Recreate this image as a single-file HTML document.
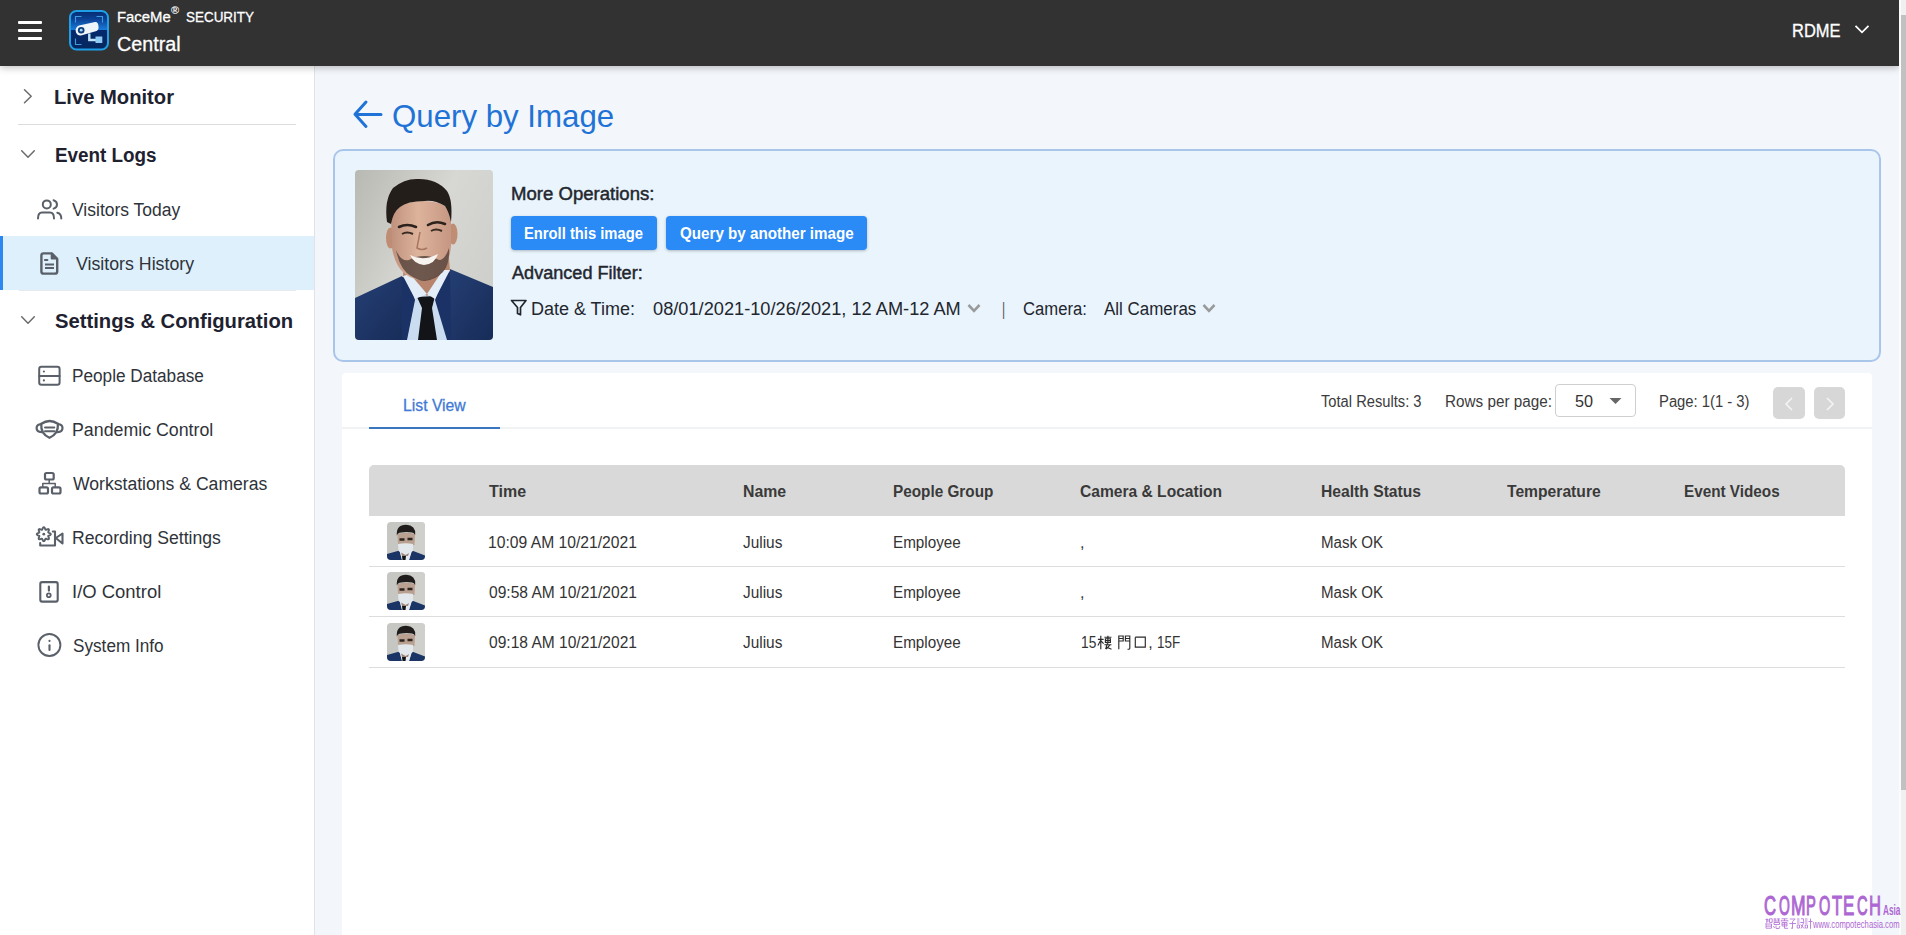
<!DOCTYPE html>
<html><head><meta charset="utf-8"><title>FaceMe Security Central - Query by Image</title>
<style>
html,body{margin:0;padding:0;width:1906px;height:935px;overflow:hidden;background:#f3f6fb;font-family:"Liberation Sans",sans-serif;}
.a{position:absolute;box-sizing:border-box;}
.t{position:absolute;white-space:nowrap;line-height:1;transform-origin:0 0;font-family:"Liberation Sans",sans-serif;}
svg{position:absolute;overflow:visible;}
</style></head><body>
<!-- main background -->
<div class="a" style="left:0;top:0;width:1899px;height:935px;background:#f3f6fb"></div>
<!-- sidebar -->
<div class="a" style="left:0;top:66px;width:314px;height:869px;background:#fff"></div>
<div class="a" style="left:314px;top:66px;width:1px;height:869px;background:#dfe2e7"></div>
<div class="a" style="left:18px;top:124px;width:278px;height:1px;background:#dcdcdc"></div>
<div class="a" style="left:0;top:236px;width:314px;height:54px;background:#def0fb"></div>
<div class="a" style="left:0;top:236px;width:3px;height:54px;background:#2c87f0"></div>
<div class="a" style="left:19px;top:290px;width:277px;height:1px;background:#e6eaee"></div>

<!-- header -->
<div class="a" style="left:0;top:0;width:1899px;height:66px;background:#323232;box-shadow:0 2px 7px rgba(0,0,0,.24)"></div>
<div class="a" style="left:18px;top:21px;width:24px;height:3px;background:#fff;border-radius:1px"></div>
<div class="a" style="left:18px;top:29px;width:24px;height:3px;background:#fff;border-radius:1px"></div>
<div class="a" style="left:18px;top:37px;width:24px;height:3px;background:#fff;border-radius:1px"></div>
<!-- logo -->
<svg style="left:69px;top:10px" width="40" height="41" viewBox="0 0 40 41">
  <defs><linearGradient id="lg" x1="0" y1="0" x2="0" y2="1">
    <stop offset="0" stop-color="#062a6e"/><stop offset="0.2" stop-color="#0b3f92"/><stop offset="0.48" stop-color="#1a78d8"/><stop offset="0.5" stop-color="#06296c"/><stop offset="1" stop-color="#05285f"/></linearGradient></defs>
  <rect x="1" y="1" width="38" height="38.5" rx="6.5" fill="url(#lg)" stroke="#1f9fe8" stroke-width="2"/>
  <path d="M6.5 12.5V6.5h6M27.5 6.5h6v6M6.5 28.5v6h6" fill="none" stroke="#3f9be0" stroke-width="1.1"/>
  <path d="M7.5 17.5 Q6 19.5 7 22.5 Q8.5 26 12 25.5 L27.5 21 Q30 20 29.5 16 Q29 11.5 26 12 L10 15.5 Q8.5 16 7.5 17.5Z" fill="#eef5fb"/>
  <circle cx="12.2" cy="20.2" r="3.3" fill="#0c3b7c"/><circle cx="12.2" cy="20.2" r="1.4" fill="#a8d4f4"/>
  <path d="M20.3 23.5 V30 H28" fill="none" stroke="#bfe2f8" stroke-width="2.4"/>
  <rect x="26.5" y="26.5" width="6.8" height="6.5" fill="#8fcaf2"/>
</svg>
<div class="t" style="left:171px;top:5px;font-size:11px;font-weight:bold;color:#fff">&#174;</div>
<svg style="left:1854px;top:24px" width="16" height="11" viewBox="0 0 16 11"><path d="M1.5 1.8 L8 8.3 L14.5 1.8" fill="none" stroke="#fff" stroke-width="1.8"/></svg>

<!-- scrollbar -->
<div class="a" style="left:1899px;top:0;width:7px;height:935px;background:#f0f0f0"></div>
<div class="a" style="left:1899px;top:0;width:2px;height:935px;background:#fbfbfb"></div>
<div class="a" style="left:1901px;top:15px;width:5px;height:775px;background:#c1c1c1"></div>

<!-- sidebar icons -->
<svg style="left:0;top:0" width="70" height="700" viewBox="0 0 70 700" fill="none" stroke="#5a6069" stroke-width="2" stroke-linecap="round" stroke-linejoin="round">
  <path d="M24.5 89.8 L31.2 96.3 L24.5 102.8" stroke="#6b6b6b" stroke-width="1.5"/>
  <path d="M21.7 150.8 L28 157.3 L34.3 150.8" stroke="#6b6b6b" stroke-width="1.5"/>
  <path d="M21.7 316.8 L28 323.3 L34.3 316.8" stroke="#6b6b6b" stroke-width="1.5"/>
  <!-- visitors today -->
  <circle cx="46.8" cy="204.4" r="4"/>
  <path d="M53.6 200.2 Q57 201.5 57 204.4 Q57 207.4 53.6 208.6"/>
  <path d="M38 218.5 Q38 212.6 42 212.6 H50 Q54 212.6 54 218.5"/>
  <path d="M57.3 212.8 Q61.3 213.8 61.3 218.5"/>
  <!-- doc -->
  <path d="M43.5 253.4 H51.8 L57.2 258.8 V271.4 Q57.2 273.6 55 273.6 H43.6 Q41.4 273.6 41.4 271.4 V255.6 Q41.4 253.4 43.5 253.4Z" stroke-width="2.4"/>
  <path d="M51.5 253.6 V258.6 H57" fill="#5a6069" stroke-width="1.6"/>
  <path d="M45 260 H47.3" stroke-width="2.2"/>
  <path d="M45 264.5 H54 M45 268 H54" stroke-width="2.2" stroke-linecap="butt"/>
  <!-- people db -->
  <rect x="39.2" y="366.8" width="20.4" height="18" rx="2.2"/>
  <path d="M39.2 376 H59.6"/>
  <circle cx="43.9" cy="371.5" r="1.1" fill="#5a6069" stroke="none"/>
  <circle cx="43.9" cy="380.4" r="1.1" fill="#5a6069" stroke="none"/>
  <!-- mask -->
  <path d="M41.3 423.8 Q49.6 418.2 57.9 423.8 Q58.6 433.5 49.5 437.8 Q40.4 433.5 41.3 423.8Z" stroke-width="2.3"/>
  <path d="M41.2 424.2 Q36.6 424.5 36.6 428 Q36.6 431.8 41.5 432.2 M58 424.2 Q62.5 424.5 62.5 428 Q62.5 431.8 57.6 432.2" stroke-width="2.2"/>
  <path d="M45 427.5 H54.3 M45 431.3 H54.3" stroke-width="2"/>
  <!-- network -->
  <rect x="45" y="473" width="8.7" height="6.5" rx="1.5" stroke-width="2.2"/>
  <path d="M49.2 479.5 V483.5 M42.8 486.3 V483.5 H55.2 V486.3" stroke-width="1.5"/>
  <rect x="39.5" y="487.3" width="8.5" height="6.2" rx="1.5" stroke-width="2.2"/>
  <rect x="52" y="487.3" width="8.5" height="6.2" rx="1.5" stroke-width="2.2"/>
  <!-- recording -->
  <path d="M50.80 534.20 L50.64 534.65 L50.19 535.04 L49.59 535.35 L48.97 535.58 L48.48 535.79 L48.23 536.04 L48.24 536.39 L48.43 536.88 L48.71 537.48 L48.92 538.13 L48.95 538.72 L48.75 539.15 L48.32 539.35 L47.73 539.32 L47.08 539.11 L46.48 538.83 L45.99 538.64 L45.64 538.63 L45.39 538.88 L45.18 539.37 L44.95 539.99 L44.64 540.59 L44.25 541.04 L43.80 541.20 L43.35 541.04 L42.96 540.59 L42.65 539.99 L42.42 539.37 L42.21 538.88 L41.96 538.63 L41.61 538.64 L41.12 538.83 L40.52 539.11 L39.87 539.32 L39.28 539.35 L38.85 539.15 L38.65 538.72 L38.68 538.13 L38.89 537.48 L39.17 536.88 L39.36 536.39 L39.37 536.04 L39.12 535.79 L38.63 535.58 L38.01 535.35 L37.41 535.04 L36.96 534.65 L36.80 534.20 L36.96 533.75 L37.41 533.36 L38.01 533.05 L38.63 532.82 L39.12 532.61 L39.37 532.36 L39.36 532.01 L39.17 531.53 L38.89 530.92 L38.68 530.27 L38.65 529.68 L38.85 529.25 L39.28 529.05 L39.87 529.08 L40.52 529.29 L41.12 529.57 L41.61 529.76 L41.96 529.77 L42.21 529.52 L42.42 529.03 L42.65 528.41 L42.96 527.81 L43.35 527.36 L43.80 527.20 L44.25 527.36 L44.64 527.81 L44.95 528.41 L45.18 529.03 L45.39 529.52 L45.64 529.77 L45.99 529.76 L46.48 529.57 L47.08 529.29 L47.73 529.08 L48.32 529.05 L48.75 529.25 L48.95 529.68 L48.92 530.27 L48.71 530.92 L48.43 531.53 L48.24 532.01 L48.23 532.36 L48.48 532.61 L48.97 532.82 L49.59 533.05 L50.19 533.36 L50.64 533.75Z" stroke-width="1.9"/>
  <circle cx="43.8" cy="534.2" r="1.4" fill="#5a6069" stroke="none"/>
  <path d="M40.2 543 V545.5 H55 V531.5 H52.8" stroke-width="2.1"/>
  <path d="M55.8 538 L62.5 533.5 V543.5 Z" stroke-width="2.1"/>
  <!-- io -->
  <rect x="40.3" y="582.1" width="17.4" height="19.5" rx="1.8" stroke-width="2.1"/>
  <path d="M48.9 586.5 V590.6" stroke-width="2.2"/>
  <circle cx="48.8" cy="595.3" r="1.9" stroke-width="1.8"/>
  <!-- info -->
  <circle cx="49.4" cy="645" r="11" stroke-width="1.9"/>
  <circle cx="49.5" cy="640.9" r="1.1" fill="#5a6069" stroke="none"/>
  <path d="M49.5 645.2 V650" stroke-width="2.1"/>
</svg>

<!-- title arrow -->
<svg style="left:352px;top:99px" width="32" height="30" viewBox="0 0 32 30" fill="none" stroke="#1f73d6" stroke-width="3" stroke-linecap="round" stroke-linejoin="round">
  <path d="M29 15.5 H3.5 M14 3 L3 15.2 L14 27.5"/>
</svg>

<!-- filter card -->
<div class="a" style="left:333px;top:149px;width:1548px;height:213px;background:#e9f4fd;border:2px solid #a9c6ea;border-radius:10px"></div>
<!-- photo -->
<svg style="left:355px;top:170px" width="138" height="170" viewBox="0 0 138 170">
  <defs>
    <clipPath id="pc"><rect x="0" y="0" width="138" height="170" rx="4"/></clipPath>
    <linearGradient id="bgg" x1="0" y1="0" x2="1" y2="0.6"><stop offset="0" stop-color="#b8b9b2"/><stop offset="0.55" stop-color="#d7d7d3"/><stop offset="1" stop-color="#cfd0cb"/></linearGradient>
    <linearGradient id="skin" x1="0" y1="0" x2="1" y2="0"><stop offset="0" stop-color="#bf917c"/><stop offset="0.45" stop-color="#ddb39c"/><stop offset="1" stop-color="#c69782"/></linearGradient>
    <linearGradient id="suit" x1="0" y1="0" x2="1" y2="1"><stop offset="0" stop-color="#253f74"/><stop offset="1" stop-color="#172c58"/></linearGradient>
  </defs>
  <g clip-path="url(#pc)">
    <rect width="138" height="170" fill="url(#bgg)"/>
    <path d="M47 108 L95 100 L93 170 L51 170Z" fill="#cadcef"/>
    <path d="M0 128 L47 106 L52 170 L0 170Z" fill="url(#suit)"/>
    <path d="M95 99 L138 117 L138 170 L92 170Z" fill="url(#suit)"/>
    <path d="M47 107 L53 105 L60 130 L52 170 L47 170Z" fill="#1a3265"/>
    <path d="M95 100 L90 103 L80 130 L92 170 L96 170Z" fill="#1a3265"/>
    <path d="M62 127 L80 126 L77 138 L82 170 L63 170 L67 138Z" fill="#121418"/>
    <path d="M49 92 L94 88 L95 101 L72 126 L48 107Z" fill="#b7856d"/>
    <path d="M48 106 L60 129 L72 124 L55 104Z" fill="#e3edf7"/>
    <path d="M95 100 L80 129 L72 124 L88 100Z" fill="#e3edf7"/>
    <ellipse cx="35.5" cy="68" rx="4.5" ry="10.5" fill="#bf8c74"/>
    <ellipse cx="98" cy="64" rx="4.5" ry="10.5" fill="#bf8c74"/>
    <path d="M36 46 Q38 33 66 31 Q94 31 96 46 L96 76 Q94 98 84 104 Q76 110 68 110 Q58 110 50 104 Q40 96 37 78Z" fill="url(#skin)"/>
    <path d="M41 80 Q45 100 56 106 Q64 111 70 111 Q80 110 88 102 Q95 94 94 78 Q90 90 84 90 Q77 86 70 86 Q60 86 54 90 Q46 92 41 80Z" fill="#4a3a33" opacity=".75"/>
    <path d="M55 85 Q68 92 83 84 Q80 94 69 95 Q59 94 55 85Z" fill="#f7f3ee"/>
    <path d="M44 57 Q52 53 61 57 M73 55 Q81 50 90 54" stroke="#2c211c" stroke-width="2.6" fill="none" stroke-linecap="round"/>
    <path d="M47 64 Q52 61 58 64 M76 61 Q81 58 87 61" stroke="#3a2a22" stroke-width="2" fill="none"/>
    <path d="M65 62 L62 78 Q67 81 72 78" stroke="#a97660" stroke-width="1.5" fill="none"/>
    <path d="M32 52 Q29 30 38 18 Q50 8 64 9 Q82 9 92 21 Q98 30 96 52 Q94 42 90 36 Q80 30 70 31 Q52 31 45 37 Q38 42 36 54Z" fill="#241e1b"/>
  </g>
</svg>
<!-- buttons -->
<div class="a" style="left:511px;top:216px;width:146px;height:34px;background:#2a8af6;border-radius:4px;box-shadow:0 1px 3px rgba(0,0,0,.25)"></div>
<div class="a" style="left:666px;top:216px;width:201px;height:34px;background:#2a8af6;border-radius:4px;box-shadow:0 1px 3px rgba(0,0,0,.25)"></div>
<!-- filter icon -->
<svg style="left:510px;top:299px" width="18" height="18" viewBox="0 0 18 18" fill="none" stroke="#23262d" stroke-width="1.7" stroke-linejoin="round">
  <path d="M1.5 1.5 H16 L10.5 8.5 V15.8 L7.5 14.5 V8.5Z"/>
</svg>
<svg style="left:966px;top:302px" width="16" height="13" viewBox="0 0 16 13"><path d="M2.5 3 L8 8.8 L13.5 3" fill="none" stroke="#9a9a9a" stroke-width="2.6"/></svg>
<svg style="left:1201px;top:302px" width="16" height="13" viewBox="0 0 16 13"><path d="M2.5 3 L8 8.8 L13.5 3" fill="none" stroke="#9a9a9a" stroke-width="2.6"/></svg>

<!-- results panel -->
<div class="a" style="left:342px;top:373px;width:1530px;height:562px;background:#fff;border-radius:4px 4px 0 0"></div>
<div class="a" style="left:342px;top:427px;width:1530px;height:2px;background:#f1f2f4"></div>
<div class="a" style="left:369px;top:427px;width:131px;height:2px;background:#3a76bd"></div>
<!-- rows per page select -->
<div class="a" style="left:1555px;top:384px;width:81px;height:33px;border:1px solid #cfcfcf;border-radius:4px;background:#fff"></div>
<svg style="left:1608px;top:396px" width="16" height="10" viewBox="0 0 16 10"><path d="M1.5 2 H13.5 L7.5 8Z" fill="#666"/></svg>
<!-- page nav -->
<div class="a" style="left:1773px;top:387px;width:32px;height:32px;background:#d7d7d7;border-radius:5px"></div>
<div class="a" style="left:1814px;top:387px;width:31px;height:32px;background:#d7d7d7;border-radius:5px"></div>
<svg style="left:1783px;top:396px" width="12" height="16" viewBox="0 0 12 16"><path d="M9 2 L3 8 L9 14" fill="none" stroke="#f4f4f4" stroke-width="1.6"/></svg>
<svg style="left:1824px;top:396px" width="12" height="16" viewBox="0 0 12 16"><path d="M3 2 L9 8 L3 14" fill="none" stroke="#f4f4f4" stroke-width="1.6"/></svg>

<!-- table -->
<div class="a" style="left:369px;top:465px;width:1476px;height:51px;background:#d9d9d9;border-radius:5px 5px 0 0"></div>
<div class="a" style="left:369px;top:566px;width:1476px;height:1px;background:#dddddd"></div>
<div class="a" style="left:369px;top:616px;width:1476px;height:1px;background:#dddddd"></div>
<div class="a" style="left:369px;top:667px;width:1476px;height:1px;background:#dddddd"></div>

<svg width="0" height="0" style="position:absolute">
  <defs>
    <clipPath id="tc"><rect x="0" y="0" width="38" height="38" rx="4"/></clipPath>
    <g id="thumb">
      <g clip-path="url(#tc)">
        <rect width="38" height="38" fill="#c6c7c2"/>
        <rect x="22" y="0" width="16" height="38" fill="#cfd0cb"/>
        <path d="M0 32 L12.5 28.5 L15 38 L0 38Z" fill="#1b3466"/>
        <path d="M38 33.5 L25 28.5 L22 38 L38 38Z" fill="#1b3466"/>
        <path d="M12.5 28.5 L25 28.5 L22 38 L15 38Z" fill="#e4ebf3"/>
        <path d="M15 34 L19 34 L18.5 38 L15.5 38Z" fill="#111316"/>
        <path d="M13.5 28 L23 28 L21 34 L15 34Z" fill="#9c8377"/>
        <path d="M10.5 12 Q19 9.5 28 12 L27.5 23 L11 23Z" fill="#b9a091"/>
        <path d="M12.5 17.5 H17.5 M20.5 17 H25.5" stroke="#2e2420" stroke-width="2.6"/>
        <path d="M11 22 Q19 20.5 26 22 L26 29 L18.5 33 L11.5 29Z" fill="#e2e8ec"/>
        <path d="M9.8 13.5 Q9 3 19 2.8 Q29 3 28.2 13 Q27 10.5 25 10.5 Q19 9.5 12.5 10.8 Q10.5 11.5 9.8 13.5Z" fill="#1f1c1b"/>
      </g>
    </g>
  </defs>
</svg>
<svg style="left:387px;top:522px" width="38" height="38"><use href="#thumb"/></svg>
<svg style="left:387px;top:572px" width="38" height="38"><use href="#thumb"/></svg>
<svg style="left:387px;top:623px" width="38" height="38"><use href="#thumb"/></svg>

<!-- watermark -->
<svg style="left:1765px;top:918px" width="48" height="11" viewBox="0 0 48 11" fill="none" stroke="#b57ad8" stroke-width="0.9">
  <path d="M0.5 1.5H3.5M1 3H4M2 0.5V4.5L0.5 5.5M4.5 0.8H7.2V4.4H4.5Z M1 6H6.5V10.2H1Z M1 8.1H6.5"/>
  <path d="M8.5 1H11.5M12 1H15M10 0.5V3.5M13.5 0.5V3.5M8.5 3H15M9 4.5H14.5V6.5H9Z M8.5 8L9.5 10M11 7.5V10.5H14.5M15 8L14 10"/>
  <path d="M16.5 0.8H22.5M19.5 0.8V3M16.3 2V3.5M22.8 2V3.5M16.8 2.8H22.3M17 4.5H22V8H17ZM17 6.2H22M19.5 4.5V10.3H23"/>
  <path d="M24.8 1H30.2L27.5 3.5M27.5 3.5V10.5L26 10M24.3 5.5H31"/>
  <path d="M32 1H34.5M32 3H34.5M32 5H34.5M32.2 7H34.5V10H32.2ZM36 0.8H38.5V3L39 4M35.3 4.5H38.8L36 10.5M35.8 6.5L39 10.5"/>
  <path d="M40 1H42.5M40 3H42.5M40 5H42.5M40.2 7H42.5V10H40.2ZM43.5 3.5H47.5M45.5 0.5V10.8"/>
</svg>

<svg style="left:1097px;top:635px" width="50" height="15" viewBox="0 0 50 15" fill="none" stroke="#2a2a2a" stroke-width="1.15">
  <g transform="translate(0.6 0.4)"><path d="M0.3 4H6M3.2 0.3V13.8M3 5L0.3 10M3.4 5.5L6 8.2"/>
  <path d="M6.8 1.8H13.8M7.8 3.3H12.8V7H7.8ZM10.3 0.3V8M7.8 5.1H12.8M6.8 9.3H13.8M9.8 8L8 13.8M8.2 11.2Q11 12.8 13.9 13.8M12.4 9.5L8.5 13.8"/></g>
  <g transform="translate(21.2 0.4)"><path d="M0.6 13.8V0.6H5V5.6H0.6M0.6 3.1H5M11.6 12.8V0.6H7.2V5.6H11.6M7.2 3.1H11.6M11.6 12.8Q11.6 13.8 10.4 13.8H9.3"/></g>
  <g transform="translate(37.7 1.6)"><path d="M0.6 0.6H10.6V11.2M0.6 0.6V11.2M0.6 10.6H10.6"/></g>
</svg>
<div class="t" style="left:116.61px;top:9px;font-size:15px;font-weight:normal;color:#fff;transform:scaleX(0.9916);-webkit-text-stroke:0.3px #fff;">FaceMe</div>
<div class="t" style="left:186.00px;top:9px;font-size:15px;font-weight:normal;color:#fff;transform:scaleX(0.8967);-webkit-text-stroke:0.3px #fff;">SECURITY</div>
<div class="t" style="left:116.61px;top:34px;font-size:20px;font-weight:normal;color:#fff;transform:scaleX(0.9853);-webkit-text-stroke:0.3px #fff;">Central</div>
<div class="t" style="left:1792.48px;top:22px;font-size:18px;font-weight:normal;color:#fff;transform:scaleX(0.9155);-webkit-text-stroke:0.3px #fff;">RDME</div>
<div class="t" style="left:54.49px;top:87px;font-size:20px;font-weight:bold;color:#1e2230;transform:scaleX(1.0093);">Live Monitor</div>
<div class="t" style="left:54.56px;top:145px;font-size:20px;font-weight:bold;color:#1e2230;transform:scaleX(0.9422);">Event Logs</div>
<div class="t" style="left:72.40px;top:201px;font-size:18px;font-weight:normal;color:#2f333a;transform:scaleX(0.9721);">Visitors Today</div>
<div class="t" style="left:75.90px;top:255px;font-size:18px;font-weight:normal;color:#2f333a;transform:scaleX(0.9867);">Visitors History</div>
<div class="t" style="left:54.90px;top:311px;font-size:20px;font-weight:bold;color:#1e2230;transform:scaleX(1.0110);">Settings &amp; Configuration</div>
<div class="t" style="left:72.05px;top:367px;font-size:18px;font-weight:normal;color:#2f333a;transform:scaleX(0.9548);">People Database</div>
<div class="t" style="left:72.11px;top:421px;font-size:18px;font-weight:normal;color:#2f333a;transform:scaleX(0.9875);">Pandemic Control</div>
<div class="t" style="left:73.10px;top:475px;font-size:18px;font-weight:normal;color:#2f333a;transform:scaleX(0.9777);">Workstations &amp; Cameras</div>
<div class="t" style="left:72.12px;top:529px;font-size:18px;font-weight:normal;color:#2f333a;transform:scaleX(0.9789);">Recording Settings</div>
<div class="t" style="left:72.27px;top:583px;font-size:18px;font-weight:normal;color:#2f333a;transform:scaleX(1.0255);">I/O Control</div>
<div class="t" style="left:73.30px;top:637px;font-size:18px;font-weight:normal;color:#2f333a;transform:scaleX(0.9534);">System Info</div>
<div class="t" style="left:391.72px;top:100px;font-size:32px;font-weight:normal;color:#1f73d6;transform:scaleX(0.9758);">Query by Image</div>
<div class="t" style="left:510.67px;top:185px;font-size:18px;font-weight:normal;color:#23262d;transform:scaleX(1.0317);-webkit-text-stroke:0.45px #23262d;">More Operations:</div>
<div class="t" style="left:524.28px;top:226px;font-size:16px;font-weight:bold;color:#fff;transform:scaleX(0.9225);">Enroll this image</div>
<div class="t" style="left:680.20px;top:226px;font-size:16px;font-weight:bold;color:#fff;transform:scaleX(0.9478);">Query by another image</div>
<div class="t" style="left:511.70px;top:264px;font-size:18px;font-weight:normal;color:#23262d;transform:scaleX(1.0050);-webkit-text-stroke:0.45px #23262d;">Advanced Filter:</div>
<div class="t" style="left:530.90px;top:300px;font-size:18px;font-weight:normal;color:#23262d;">Date &amp; Time:</div>
<div class="t" style="left:652.60px;top:300px;font-size:18px;font-weight:normal;color:#23262d;transform:scaleX(1.0117);">08/01/2021-10/26/2021, 12 AM-12 AM</div>
<div class="t" style="left:1002.33px;top:300px;font-size:18px;font-weight:normal;color:#555;transform:scaleX(0.6667);">|</div>
<div class="t" style="left:1022.80px;top:300px;font-size:18px;font-weight:normal;color:#23262d;transform:scaleX(0.9247);">Camera:</div>
<div class="t" style="left:1103.60px;top:300px;font-size:18px;font-weight:normal;color:#23262d;transform:scaleX(0.9416);">All Cameras</div>
<div class="t" style="left:402.52px;top:398px;font-size:16px;font-weight:normal;color:#3f7ad6;transform:scaleX(0.9845);-webkit-text-stroke:0.3px #3f7ad6;">List View</div>
<div class="t" style="left:1321.00px;top:394px;font-size:16px;font-weight:normal;color:#3b3b3b;transform:scaleX(0.9189);">Total Results: 3</div>
<div class="t" style="left:1444.95px;top:394px;font-size:16px;font-weight:normal;color:#3b3b3b;transform:scaleX(0.9542);">Rows per page:</div>
<div class="t" style="left:1574.80px;top:393px;font-size:17px;font-weight:normal;color:#333;transform:scaleX(0.9537);">50</div>
<div class="t" style="left:1659.37px;top:394px;font-size:16px;font-weight:normal;color:#3b3b3b;transform:scaleX(0.9254);">Page: 1(1 - 3)</div>
<div class="t" style="left:489.00px;top:484px;font-size:16px;font-weight:bold;color:#3a3a3a;">Time</div>
<div class="t" style="left:743.01px;top:484px;font-size:16px;font-weight:bold;color:#3a3a3a;transform:scaleX(0.9911);">Name</div>
<div class="t" style="left:892.84px;top:484px;font-size:16px;font-weight:bold;color:#3a3a3a;transform:scaleX(0.9565);">People Group</div>
<div class="t" style="left:1080.20px;top:484px;font-size:16px;font-weight:bold;color:#3a3a3a;transform:scaleX(0.9742);">Camera &amp; Location</div>
<div class="t" style="left:1321.32px;top:484px;font-size:16px;font-weight:bold;color:#3a3a3a;transform:scaleX(0.9788);">Health Status</div>
<div class="t" style="left:1506.70px;top:484px;font-size:16px;font-weight:bold;color:#3a3a3a;transform:scaleX(0.9788);">Temperature</div>
<div class="t" style="left:1683.75px;top:484px;font-size:16px;font-weight:bold;color:#3a3a3a;transform:scaleX(0.9548);">Event Videos</div>
<div class="t" style="left:487.72px;top:535px;font-size:16px;font-weight:normal;color:#333;transform:scaleX(0.9789);">10:09 AM 10/21/2021</div>
<div class="t" style="left:743.30px;top:535px;font-size:16px;font-weight:normal;color:#333;transform:scaleX(0.9632);">Julius</div>
<div class="t" style="left:892.55px;top:535px;font-size:16px;font-weight:normal;color:#333;transform:scaleX(0.9523);">Employee</div>
<div class="t" style="left:1321.46px;top:535px;font-size:16px;font-weight:normal;color:#333;transform:scaleX(0.9429);">Mask OK</div>
<div class="t" style="left:1080.00px;top:535px;font-size:16px;font-weight:normal;color:#333;">,</div>
<div class="t" style="left:488.70px;top:585px;font-size:16px;font-weight:normal;color:#333;transform:scaleX(0.9725);">09:58 AM 10/21/2021</div>
<div class="t" style="left:743.30px;top:585px;font-size:16px;font-weight:normal;color:#333;transform:scaleX(0.9632);">Julius</div>
<div class="t" style="left:892.55px;top:585px;font-size:16px;font-weight:normal;color:#333;transform:scaleX(0.9523);">Employee</div>
<div class="t" style="left:1321.46px;top:585px;font-size:16px;font-weight:normal;color:#333;transform:scaleX(0.9429);">Mask OK</div>
<div class="t" style="left:1080.00px;top:585px;font-size:16px;font-weight:normal;color:#333;">,</div>
<div class="t" style="left:488.70px;top:635px;font-size:16px;font-weight:normal;color:#333;transform:scaleX(0.9725);">09:18 AM 10/21/2021</div>
<div class="t" style="left:743.30px;top:635px;font-size:16px;font-weight:normal;color:#333;transform:scaleX(0.9632);">Julius</div>
<div class="t" style="left:892.55px;top:635px;font-size:16px;font-weight:normal;color:#333;transform:scaleX(0.9523);">Employee</div>
<div class="t" style="left:1321.46px;top:635px;font-size:16px;font-weight:normal;color:#333;transform:scaleX(0.9429);">Mask OK</div>
<div class="t" style="left:1080.74px;top:635px;font-size:16px;font-weight:normal;color:#333;transform:scaleX(0.8581);">15</div>
<div class="t" style="left:1148.20px;top:635px;font-size:16px;font-weight:normal;color:#333;">,</div>
<div class="t" style="left:1156.86px;top:635px;font-size:16px;font-weight:normal;color:#333;transform:scaleX(0.8434);">15F</div>
<div class="t" style="left:1764.48px;top:893px;font-size:27px;font-weight:normal;color:#ad66d2;transform:scaleX(0.6167);-webkit-text-stroke:1.1px #ad66d2;">C</div>
<div class="t" style="left:1778.98px;top:893px;font-size:27px;font-weight:normal;color:#ad66d2;transform:scaleX(0.5158);-webkit-text-stroke:1.1px #ad66d2;">O</div>
<div class="t" style="left:1790.81px;top:893px;font-size:27px;font-weight:normal;color:#ad66d2;transform:scaleX(0.6474);-webkit-text-stroke:1.1px #ad66d2;">M</div>
<div class="t" style="left:1806.21px;top:893px;font-size:27px;font-weight:normal;color:#ad66d2;transform:scaleX(0.5467);-webkit-text-stroke:1.1px #ad66d2;">P</div>
<div class="t" style="left:1819.06px;top:893px;font-size:27px;font-weight:normal;color:#ad66d2;transform:scaleX(0.5368);-webkit-text-stroke:1.1px #ad66d2;">O</div>
<div class="t" style="left:1832.20px;top:893px;font-size:27px;font-weight:normal;color:#ad66d2;transform:scaleX(0.6125);-webkit-text-stroke:1.1px #ad66d2;">T</div>
<div class="t" style="left:1843.25px;top:893px;font-size:27px;font-weight:normal;color:#ad66d2;transform:scaleX(0.6267);-webkit-text-stroke:1.1px #ad66d2;">E</div>
<div class="t" style="left:1856.66px;top:893px;font-size:27px;font-weight:normal;color:#ad66d2;transform:scaleX(0.5444);-webkit-text-stroke:1.1px #ad66d2;">C</div>
<div class="t" style="left:1869.08px;top:893px;font-size:27px;font-weight:normal;color:#ad66d2;transform:scaleX(0.6125);-webkit-text-stroke:1.1px #ad66d2;">H</div>
<div class="t" style="left:1883.00px;top:903px;font-size:14px;font-weight:bold;color:#ad66d2;transform:scaleX(0.5909);">Asia</div>
<div class="t" style="left:1813.23px;top:919px;font-size:10.5px;font-weight:normal;color:#ad66d2;transform:scaleX(0.7309);">www.compotechasia.com</div>
</body></html>
